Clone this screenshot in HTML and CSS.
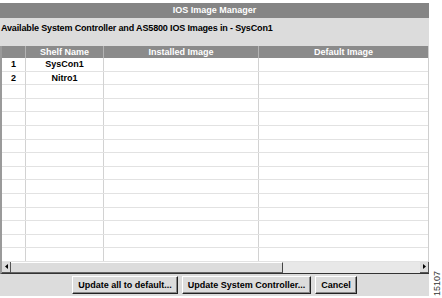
FILE: index.html
```html
<!DOCTYPE html>
<html lang="en">
<head>
  <meta charset="UTF-8" />
  <title>IOS Image Manager</title>
  <link rel="stylesheet" href="styles.css">
</head>
<body>

  <!-- Dialog window -->
  <div class="window">
    <div class="titlebar">IOS Image Manager</div>
    <div class="caption">Available System Controller and AS5800 IOS Images in - SysCon1</div>

    <!-- Image table -->
    <div class="grid">
      <div class="row head">
        <div class="cell"></div>
        <div class="cell">Shelf Name</div>
        <div class="cell">Installed Image</div>
        <div class="cell">Default Image</div>
      </div>
      <div class="row">
        <div class="cell">1</div>
        <div class="cell">SysCon1</div>
        <div class="cell"></div>
        <div class="cell"></div>
      </div>
      <div class="row">
        <div class="cell">2</div>
        <div class="cell">Nitro1</div>
        <div class="cell"></div>
        <div class="cell"></div>
      </div>
      <div class="row"><div class="cell"></div><div class="cell"></div><div class="cell"></div><div class="cell"></div></div>
      <div class="row"><div class="cell"></div><div class="cell"></div><div class="cell"></div><div class="cell"></div></div>
      <div class="row"><div class="cell"></div><div class="cell"></div><div class="cell"></div><div class="cell"></div></div>
      <div class="row"><div class="cell"></div><div class="cell"></div><div class="cell"></div><div class="cell"></div></div>
      <div class="row"><div class="cell"></div><div class="cell"></div><div class="cell"></div><div class="cell"></div></div>
      <div class="row"><div class="cell"></div><div class="cell"></div><div class="cell"></div><div class="cell"></div></div>
      <div class="row"><div class="cell"></div><div class="cell"></div><div class="cell"></div><div class="cell"></div></div>
      <div class="row"><div class="cell"></div><div class="cell"></div><div class="cell"></div><div class="cell"></div></div>
      <div class="row"><div class="cell"></div><div class="cell"></div><div class="cell"></div><div class="cell"></div></div>
      <div class="row"><div class="cell"></div><div class="cell"></div><div class="cell"></div><div class="cell"></div></div>
      <div class="row"><div class="cell"></div><div class="cell"></div><div class="cell"></div><div class="cell"></div></div>
      <div class="row"><div class="cell"></div><div class="cell"></div><div class="cell"></div><div class="cell"></div></div>
      <div class="row"><div class="cell"></div><div class="cell"></div><div class="cell"></div><div class="cell"></div></div>
    </div>

    <!-- Horizontal scrollbar -->
    <div class="hscroll">
      <div class="arrow">
        <svg width="3" height="5" viewBox="0 0 3 5"><path d="M3 0 L0 2.5 L3 5 Z" fill="#000"/></svg>
      </div>
      <div class="thumb"></div>
      <div class="track"></div>
      <div class="arrow">
        <svg width="3" height="5" viewBox="0 0 3 5"><path d="M0 0 L3 2.5 L0 5 Z" fill="#000"/></svg>
      </div>
    </div>

    <!-- Buttons -->
    <div class="buttons">
      <button type="button">Update all to default...</button>
      <button type="button">Update System Controller...</button>
      <button type="button">Cancel</button>
    </div>
  </div>

  <div class="figno">15107</div>

</body>
</html>
```

FILE: styles.css
```css
body {
  margin: 0;
  padding-top: 3px;
  background: #fff;
  font-family: 'Liberation Sans', Arial, sans-serif;
  font-size: 9px;
  color: #000;
  display: flex;
  align-items: flex-end;
  gap: 3px;
}

/* Window */
.window {
  width: 430px;
  display: flex;
  flex-direction: column;
  background: #dcdcdc;
}

.titlebar {
  height: 15px;
  line-height: 15px;
  background: #858585;
  color: #fff;
  font-weight: bold;
  text-align: center;
}

.caption {
  height: 28px;
  padding: 5px 0 0 1px;
  box-sizing: border-box;
  font-weight: bold;
  letter-spacing: -0.15px;
  line-height: 11px;
}

/* Table */
.grid {
  background: #fff;
  border-left: 2px solid #9a9a9a;
  border-right: 1px solid #cfcfcf;
}

.row {
  display: grid;
  grid-template-columns: 24px 78px 155px 1fr;
  height: 13.6px;
  box-sizing: border-box;
  border-bottom: 1px solid #e2e2e2;
}

.row .cell {
  border-right: 1px solid #d2d2d2;
  text-align: center;
  font-weight: bold;
  line-height: 13px;
}

.row .cell:last-child {
  border-right: none;
}

.row.head {
  height: 12px;
  background: #8b8b8b;
  border-bottom: none;
}

.row.head .cell {
  color: #fff;
  line-height: 12px;
  border-right: 1px solid #b4b4b4;
}

.row.head .cell:last-child {
  border-right: none;
}

/* Scrollbar */
.hscroll {
  display: flex;
  height: 11px;
  background: #e8e8e8;
  border-left: 2px solid #9a9a9a;
  border-bottom: 1px solid #333;
}

.hscroll .arrow {
  width: 9px;
  display: flex;
  align-items: center;
  justify-content: center;
  background: #dcdcdc;
  border-right: 1px solid #555;
  border-bottom: 1px solid #555;
  box-sizing: border-box;
}

.hscroll .thumb {
  width: 272px;
  background: #dcdcdc;
  border-top: 1px solid #fff;
  border-right: 1px solid #444;
  border-bottom: 1px solid #666;
  box-sizing: border-box;
}

.hscroll .track {
  flex: 1;
}

/* Buttons */
.buttons {
  height: 22px;
  padding-top: 2px;
  box-sizing: border-box;
  display: flex;
  justify-content: center;
  align-items: flex-start;
  gap: 4px;
}

.buttons button {
  height: 18px;
  padding: 0 5px;
  font-family: 'Liberation Sans', Arial, sans-serif;
  font-size: 9px;
  font-weight: bold;
  color: #000;
  background: #dcdcdc;
  border: 1px solid;
  border-color: #fff #222 #222 #fff;
  box-shadow: inset -1px -1px 0 #888;
  cursor: pointer;
}

/* Figure number */
.figno {
  writing-mode: vertical-rl;
  transform: rotate(180deg);
  font-size: 9px;
  color: #333;
  padding-bottom: 2px;
}
```
